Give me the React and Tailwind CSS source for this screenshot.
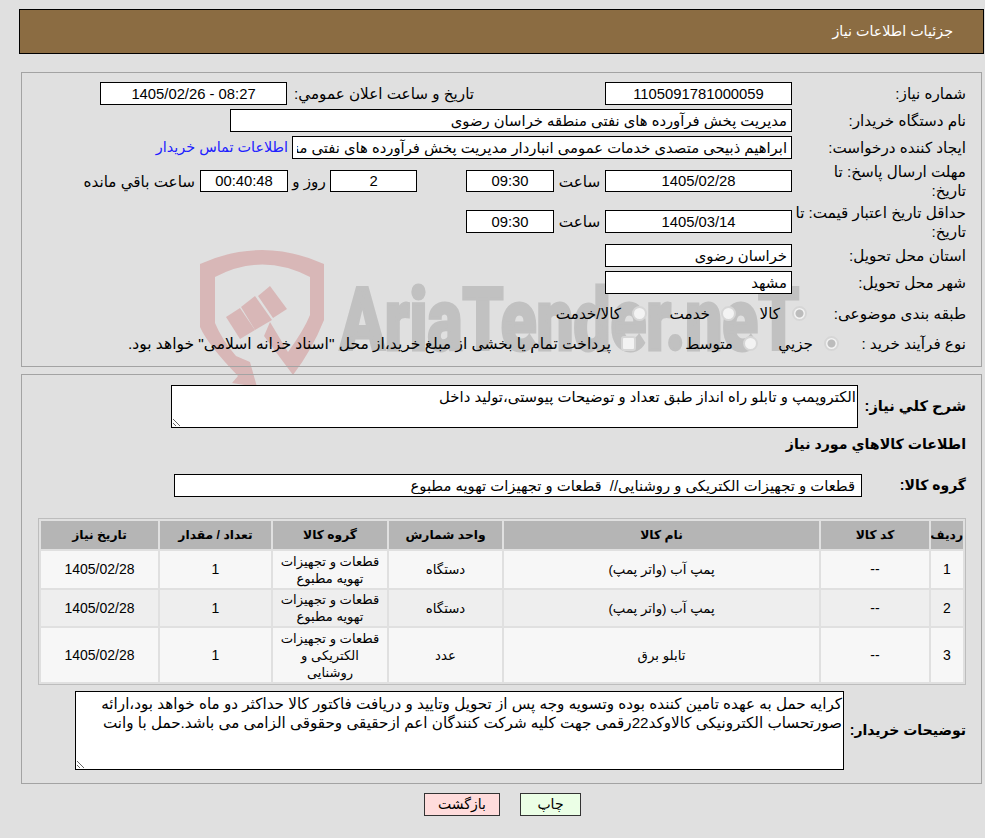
import React from "react";

const inputBase =
  "shrink-0 border border-black bg-white px-1 text-[14.8px] leading-none text-black outline-none";

function Field({ value, width, center = true, bg = "bg-white", h = "h-[23px]", ltr = false }) {
  return (
    <input
      readOnly
      value={value}
      dir={ltr ? "ltr" : "rtl"}
      className={`${inputBase} ${width} ${h} ${bg} ${center ? "text-center" : "text-right"}`}
    />
  );
}

function Radio({ checked }) {
  return (
    <input
      type="radio"
      disabled
      checked={!!checked}
      readOnly
      className="m-0 h-[15px] w-[15px] shrink-0 appearance-none rounded-full border-2 border-[#d6d6d6] bg-[#f3f3f3] checked:bg-[radial-gradient(circle,#bcbcbc_0,#bcbcbc_3.5px,#f3f3f3_4.5px)]"
    />
  );
}

const rows = [
  { n: "1", name: "پمپ آب (واتر پمپ)", unit: "دستگاه", group: "قطعات و تجهیزات تهویه مطبوع", bg: "bg-[#f7f7f7]", h: "h-[37px]" },
  { n: "2", name: "پمپ آب (واتر پمپ)", unit: "دستگاه", group: "قطعات و تجهیزات تهویه مطبوع", bg: "bg-[#eeeeee]", h: "h-[36px]" },
  { n: "3", name: "تابلو برق", unit: "عدد", group: "قطعات و تجهیزات الکتریکی و روشنایی", bg: "bg-[#f7f7f7]", h: "h-[54px]" },
];

function Watermark() {
  return (
    <div className="absolute left-0 top-0 z-0 h-[400px] w-[985px] overflow-hidden">
      <svg viewBox="0 0 985 400" className="absolute left-0 top-0 h-[400px] w-[985px]">
        <path
          fill="#d8b7b7"
          fillRule="evenodd"
          d="M200 264 Q262 236 324 264 L324 320 Q312 350 293 375 L264 336 L270 322 L288 352 Q304 330 310 315 L310 277 Q262 252 215 277 L215 323 Q222 340 236 356 L250 362 L257 387 L232 383 L238 376 Q208 345 200 327 Z"
        />
        <polygon fill="#d8b7b7" points="270,286 287,309 273,318 258,296" />
        <polygon fill="#d8b7b7" points="255,296 272,320 255,330 241,307" />
        <polygon fill="#d8b7b7" points="240,308 255,330 240,339 226,317" />
      </svg>
      <div
        dir="ltr"
        className="absolute left-[340px] top-[270px] origin-left scale-x-[0.745] whitespace-nowrap font-['Roboto',sans-serif] text-[88px] font-black leading-[100px] text-[#c1c1c1] [-webkit-text-stroke:3px_#c1c1c1]"
      >
        AriaTender.neT
      </div>
    </div>
  );
}

export default function App() {
  return (
    <div dir="rtl" className="relative min-h-[838px] bg-[#e0e0e0] pt-[9px] font-['Liberation_Sans','DejaVu_Sans',sans-serif] text-[15.2px] leading-[19px] text-black">
      <Watermark />
      <div className="relative z-10">
        <header className="ml-[19px] mr-px flex h-[45px] items-center border border-black bg-[#8b6c42] pr-[30px] text-[14.3px] text-white">
          جزئیات اطلاعات نیاز
        </header>

        <section className="ml-[21px] mr-[3px] mt-[18px] h-[295px] border border-[#a3a3a3] pr-[15px] pt-[9px]">
          <div className="flex items-center">
            <label className="w-[174px] shrink-0">شماره نیاز:</label>
            <Field value="1105091781000059" width="w-[187px]" />
            <span className="mr-[131px] w-[187px] shrink-0">تاریخ و ساعت اعلان عمومي:</span>
            <Field value="1405/02/26 - 08:27" width="w-[187px]" ltr />
          </div>
          <div className="mt-[4px] flex items-center">
            <label className="w-[174px] shrink-0">نام دستگاه خریدار:</label>
            <Field value="مدیریت پخش فرآورده های نفتی منطقه خراسان رضوی" width="w-[562px]" center={false} />
          </div>
          <div className="mt-[4px] flex items-center">
            <label className="w-[174px] shrink-0">ایجاد کننده درخواست:</label>
            <Field value="ابراهیم ذبیحی متصدی خدمات عمومی انباردار مدیریت پخش فرآورده های نفتی منطقه خراسان رضوی" width="w-[500px]" center={false} />
            <a className="mr-[4px] text-[14.4px] text-[#2020ff]">اطلاعات تماس خریدار</a>
          </div>
          <div className="mt-[3px] flex h-[38px] items-center">
            <label className="w-[174px] shrink-0 pl-[14px]">مهلت ارسال پاسخ: تا تاریخ:</label>
            <Field value="1405/02/28" width="w-[187px]" h="h-[22px]" />
            <span className="w-[51px] shrink-0 text-center">ساعت</span>
            <Field value="09:30" width="w-[88px]" h="h-[22px]" />
            <Field value="2" width="mr-[49px] w-[87px]" h="h-[22px]" />
            <span className="w-[42px] shrink-0 text-center">روز و</span>
            <Field value="00:40:48" width="w-[88px]" bg="bg-[#ffffee]" h="h-[22px]" />
            <span className="mr-[5px] whitespace-nowrap">ساعت باقي مانده</span>
          </div>
          <div className="mt-[3px] flex h-[37px] items-center">
            <label className="w-[174px] shrink-0">حداقل تاریخ اعتبار قیمت: تا تاریخ:</label>
            <Field value="1405/03/14" width="w-[187px]" />
            <span className="w-[51px] shrink-0 text-center">ساعت</span>
            <Field value="09:30" width="w-[88px]" />
          </div>
          <div className="mt-[4px] flex items-center">
            <label className="w-[174px] shrink-0">استان محل تحویل:</label>
            <Field value="خراسان رضوی" width="w-[187px]" center={false} />
          </div>
          <div className="mt-[4px] flex items-center">
            <label className="w-[174px] shrink-0">شهر محل تحویل:</label>
            <Field value="مشهد" width="w-[187px]" center={false} />
          </div>
          <div className="mt-[7px] flex h-[24px] items-center">
            <label className="w-[159px] shrink-0">طبقه بندی موضوعی:</label>
            <div className="flex w-[71px] shrink-0 items-center gap-[12px]"><Radio checked /><span>کالا</span></div>
            <div className="flex w-[89px] shrink-0 items-center gap-[11px]"><Radio /><span>خدمت</span></div>
            <div className="flex items-center gap-[11px]"><Radio /><span>کالا/خدمت</span></div>
          </div>
          <div className="mt-[6px] flex h-[24px] items-center">
            <label className="w-[127px] shrink-0">نوع فرآیند خرید :</label>
            <div className="flex w-[81px] shrink-0 items-center gap-[11px]"><Radio checked /><span>جزيي</span></div>
            <div className="flex w-[122px] shrink-0 items-center gap-[10px]"><Radio /><span>متوسط</span></div>
            <div className="flex items-center gap-[10px]">
              <input type="checkbox" disabled readOnly className="m-0 h-[15px] w-[15px] shrink-0 appearance-none rounded-[3px] border-2 border-[#d6d6d6] bg-[#f3f3f3]" />
              <span className="whitespace-nowrap text-[15.5px]">پرداخت تمام یا بخشی از مبلغ خرید،از محل "اسناد خزانه اسلامی" خواهد بود.</span>
            </div>
          </div>
        </section>

        <section className="ml-[21px] mr-[3px] mt-[7px] h-[410px] border border-[#a3a3a3] pr-[15px] pt-[10px]">
          <div className="flex items-center">
            <label className="w-[108px] shrink-0 text-[14.6px] font-bold">شرح كلي نياز:</label>
            <textarea
              readOnly
              value="الکتروپمپ و تابلو راه انداز طبق تعداد و توضیحات پیوستی،تولید داخل"
              className="h-[43px] w-[687px] shrink-0 border border-black bg-white px-px py-0.5 text-[14.85px] leading-[19px] outline-none"
            />
          </div>
          <h2 className="mt-[4px] h-[24px] text-[14.2px] font-bold leading-[24px]">اطلاعات كالاهاي مورد نياز</h2>
          <div className="mt-[18px] flex items-center">
            <label className="w-[104px] shrink-0 text-[14px] font-bold">گروه کالا:</label>
            <input
              readOnly
              value="قطعات و تجهیزات الکتریکی و روشنایی//  قطعات و تجهیزات تهویه مطبوع"
              className="h-[23px] w-[688px] shrink-0 border border-black bg-white px-1.5 text-[14.8px] outline-none"
            />
          </div>
          <table className="mt-[21px] w-[928px] table-fixed border-separate border-spacing-[2px] border border-[#bdbdbd] text-center text-[13.3px] leading-[17px]">
            <colgroup>
              <col className="w-[32px]" />
              <col className="w-[108px]" />
              <col className="w-[315px]" />
              <col className="w-[113px]" />
              <col className="w-[114px]" />
              <col className="w-[111px]" />
              <col className="w-[117px]" />
            </colgroup>
            <thead>
              <tr className="h-[28px] bg-[#b5b5b5]">
                {["ردیف", "کد کالا", "نام کالا", "واحد شمارش", "گروه کالا", "تعداد / مقدار", "تاریخ نیاز"].map((t) => (
                  <th key={t} className="overflow-hidden whitespace-nowrap p-0 text-[12.3px] font-bold">{t}</th>
                ))}
              </tr>
            </thead>
            <tbody>
              {rows.map((r) => (
                <tr key={r.n} className={`${r.h} ${r.bg}`}>
                  <td className="p-0 text-[14px]">{r.n}</td>
                  <td className="p-0 text-[14px]">--</td>
                  <td className="p-0">{r.name}</td>
                  <td className="p-0">{r.unit}</td>
                  <td className="px-[6px] py-0 text-[13.1px]">{r.group}</td>
                  <td className="p-0 text-[14px]">1</td>
                  <td className="p-0 text-[14px]">1405/02/28</td>
                </tr>
              ))}
            </tbody>
          </table>
          <div className="mt-[6px] flex items-center">
            <label className="w-[122px] shrink-0 text-[14px] font-bold">توضیحات خریدار:</label>
            <textarea
              readOnly
              value="کرایه حمل به عهده تامین کننده بوده وتسویه وجه پس از تحویل وتایید و دریافت فاکتور کالا حداکثر دو ماه خواهد بود،ارائه صورتحساب الکترونیکی کالاوکد22رقمی جهت کلیه شرکت کنندگان اعم ازحقیقی وحقوقی الزامی می باشد.حمل با وانت"
              className="h-[79px] w-[769px] shrink-0 border border-black bg-white px-px py-0.5 text-[15.2px] leading-[19px] outline-none"
            />
          </div>
        </section>

        <div className="mt-[9px] flex justify-center gap-[20px] pl-[20px]">
          <button className="h-[23px] w-[61px] border border-[#333] bg-[#ebffe6] text-[14px]">چاپ</button>
          <button className="h-[23px] w-[76px] border border-[#333] bg-[#ffdcdc] text-[14px]">بازگشت</button>
        </div>
      </div>
    </div>
  );
}
